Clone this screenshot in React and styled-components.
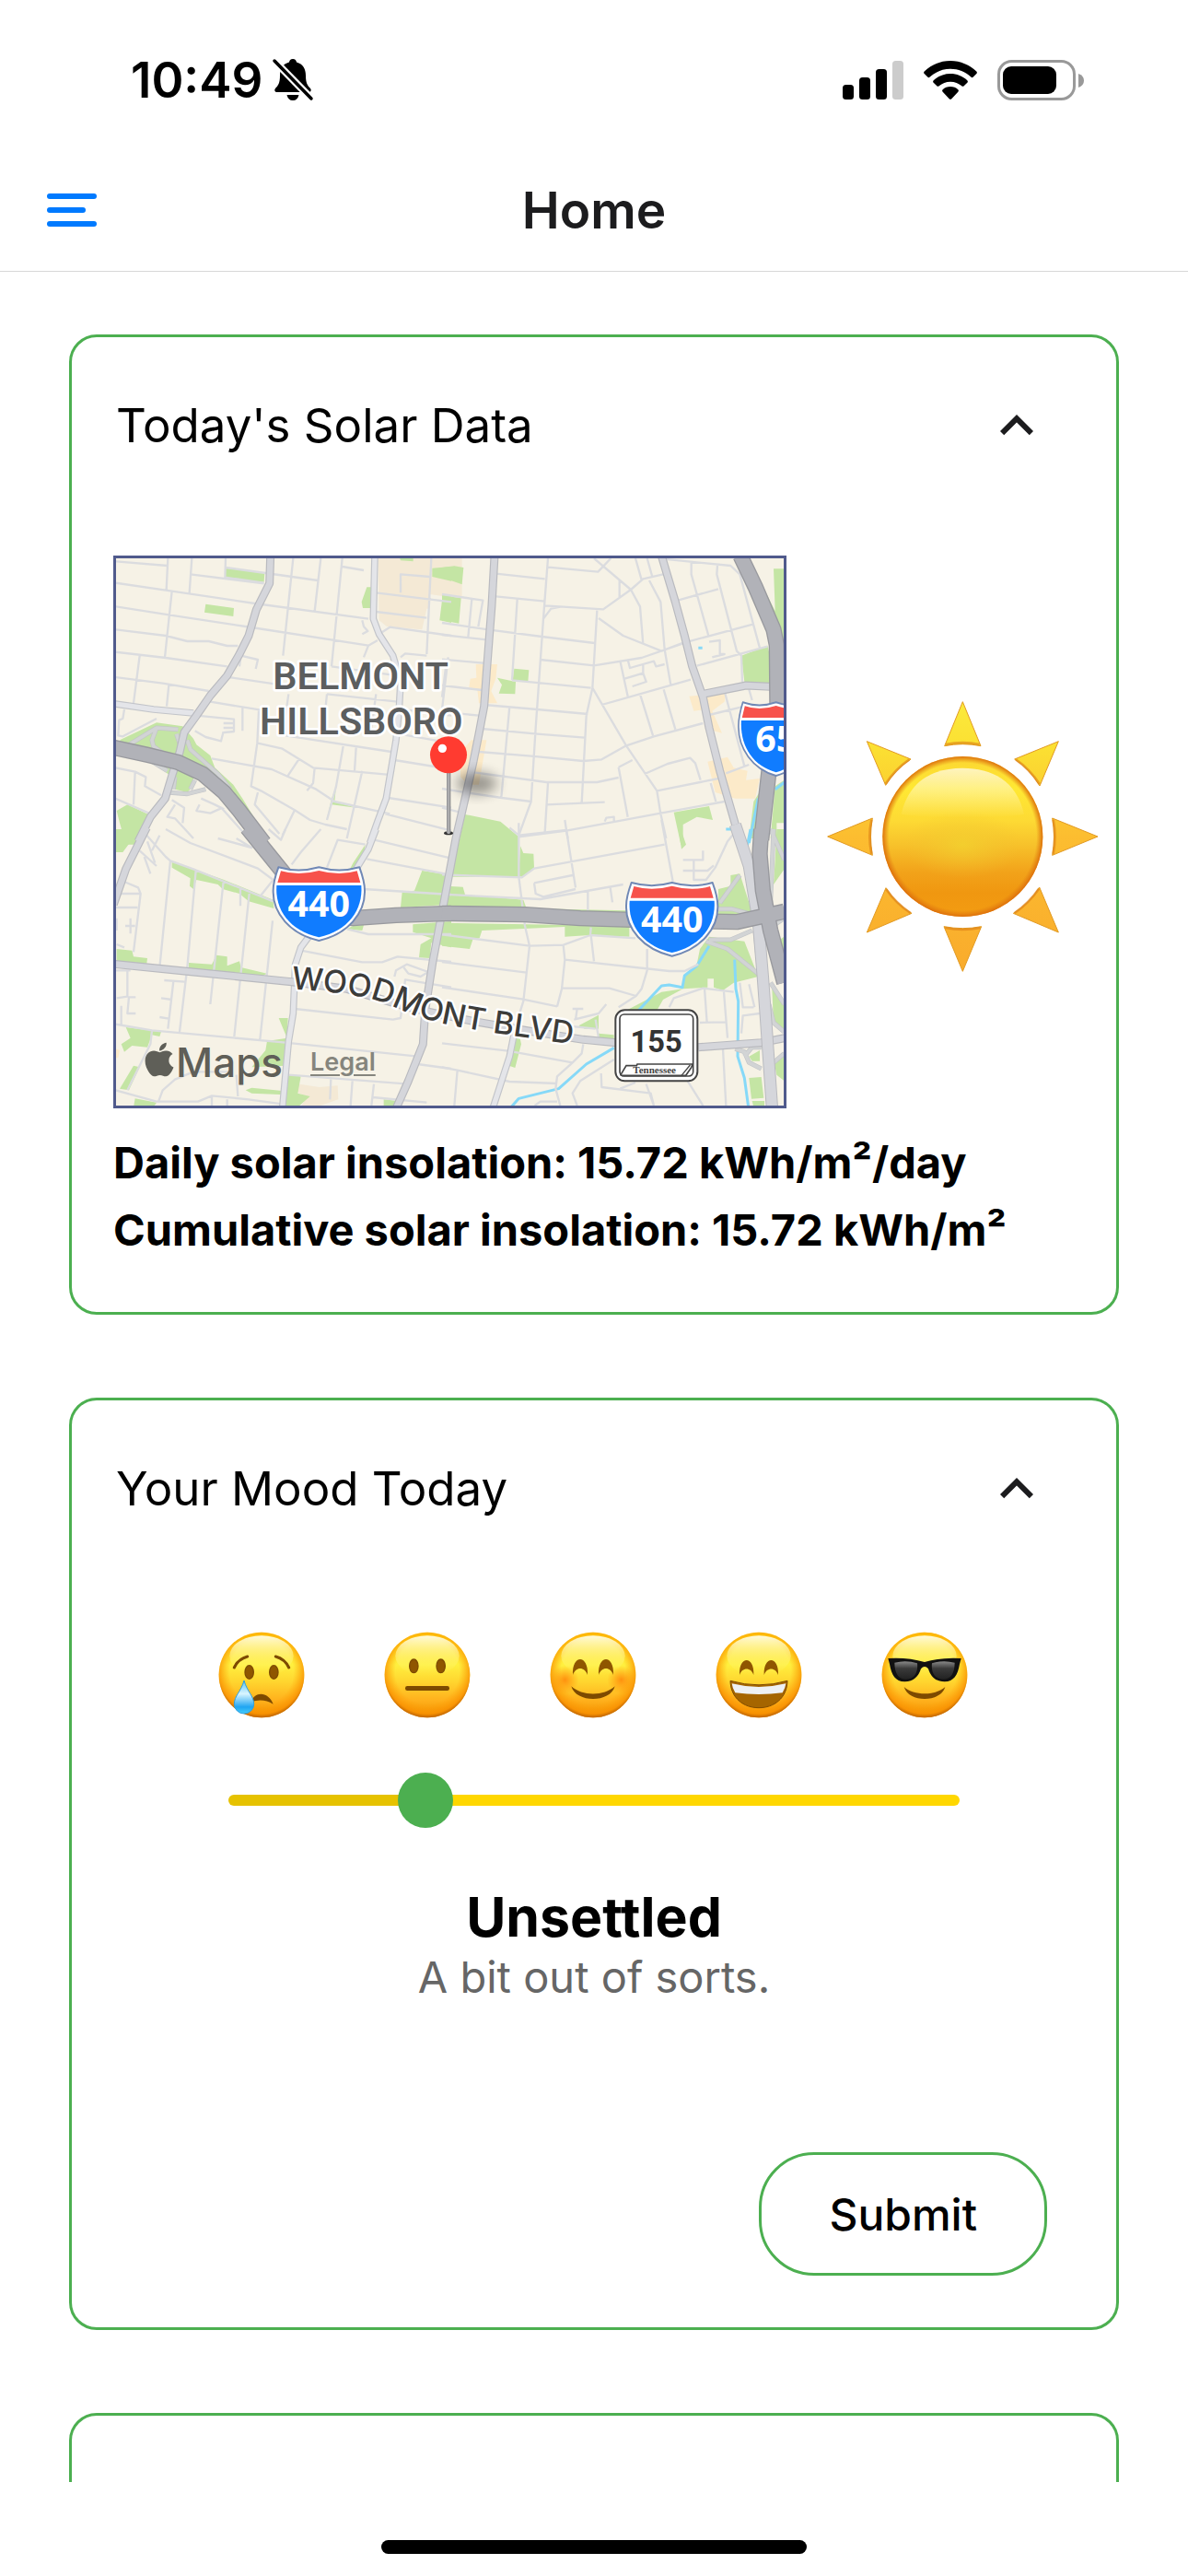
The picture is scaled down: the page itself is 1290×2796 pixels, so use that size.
import React, { useState } from "react";
import styled, { createGlobalStyle } from "styled-components";
import { FaApple } from "react-icons/fa";

const GREEN = "#4caf50";

const GlobalStyle = createGlobalStyle`
  *, *::before, *::after { box-sizing: border-box; }
  body {
    margin: 0;
    background: #ffffff;
    color: #000000;
    font-family: Inter, "Liberation Sans", sans-serif;
  }
  button { font: inherit; color: inherit; background: none; border: 0; padding: 0; cursor: pointer; }
  h1, h2, p { margin: 0; }
  svg { display: block; }
`;

const Screen = styled.div`
  display: flex;
  flex-direction: column;
  height: 100vh;
`;

const StatusBar = styled.div`
  flex: none;
  display: flex;
  align-items: center;
  justify-content: space-between;
  height: 174px;
  padding: 0 112px 0 142px;
`;

const StatusGroup = styled.div`
  display: flex;
  align-items: center;
  gap: ${(p) => p.$gap}px;
`;

const Clock = styled.span`
  font-size: 53px;
  font-weight: 600;
  line-height: 60px;
`;

const NavBar = styled.header`
  flex: none;
  display: grid;
  grid-template-columns: 1fr auto 1fr;
  align-items: center;
  height: 121px;
  padding: 0 51px 12px;
  border-bottom: 1px solid #d8d8d8;
`;

const MenuButton = styled.button`
  justify-self: start;
`;

const NavTitle = styled.h1`
  font-size: 55px;
  font-weight: 600;
  line-height: 66px;
  color: #1c1c1e;
`;

const Content = styled.main`
  flex: 1;
  min-height: 0;
  display: flex;
  flex-direction: column;
  gap: 90px;
  padding: 68px 75px;
  overflow-y: auto;
  scrollbar-width: none;
`;

const Card = styled.section`
  flex: none;
  min-height: 300px;
  border: 3px solid ${GREEN};
  border-radius: 30px;
`;

const CardToggle = styled.button`
  display: flex;
  align-items: center;
  justify-content: space-between;
  width: 100%;
  height: 192px;
  padding: 0 72px 0 48px;
`;

const CardTitle = styled.span`
  font-size: 51px;
  line-height: 66px;
`;

const SolarBody = styled.div`
  padding: 45px 16px 53px 45px;
`;

const SolarRow = styled.div`
  display: flex;
  align-items: center;
  gap: 42px;
`;

const MapFrame = styled.figure`
  position: relative;
  flex: 1;
  min-width: 0;
  height: 600px;
  margin: 0;
  border: 3px solid #505a8c;
  overflow: hidden;
`;

const MapDrawing = styled.svg`
  width: 100%;
  height: 100%;
`;

const Attribution = styled.figcaption`
  position: absolute;
  left: 31px;
  bottom: 20px;
  display: flex;
  align-items: center;
  gap: 30px;
  color: #5f5f58;
`;

const MapsBrand = styled.span`
  display: flex;
  align-items: center;
  gap: 2px;
  font-size: 44px;
  font-weight: 500;
  line-height: 54px;
  svg {
    width: 32px;
    height: 42px;
    margin-bottom: 6px;
  }
`;

const LegalLink = styled.a`
  font-size: 27px;
  font-weight: 600;
  line-height: 36px;
  color: #85857d;
  text-decoration: underline;
  text-underline-offset: 4px;
`;

const Readings = styled.div`
  margin-top: 22px;
  font-size: 47px;
  font-weight: 700;
  line-height: 73px;
`;

const MoodBody = styled.div`
  display: flex;
  flex-direction: column;
  align-items: center;
  padding: 58px 75px 56px;
`;

const FaceRow = styled.div`
  display: flex;
  justify-content: space-between;
  width: 100%;
  max-width: 816px;
`;

const MoodSlider = styled.input`
  appearance: none;
  width: 100%;
  max-width: 794px;
  height: 60px;
  margin: 58px 0 0;
  background: transparent;
  &::-webkit-slider-runnable-track {
    height: 12px;
    border-radius: 6px;
    background: linear-gradient(to right, #e6c200 ${(p) => p.$fill}%, #ffd700 ${(p) => p.$fill}%);
  }
  &::-webkit-slider-thumb {
    appearance: none;
    width: 60px;
    height: 60px;
    margin-top: -24px;
    border-radius: 50%;
    background: ${GREEN};
  }
`;

const MoodName = styled.p`
  margin-top: 61px;
  font-size: 59px;
  font-weight: 700;
  line-height: 72px;
`;

const MoodNote = styled.p`
  font-size: 47px;
  line-height: 57px;
  color: #666666;
`;

const SubmitButton = styled.button`
  align-self: flex-end;
  margin-top: 162px;
  height: 134px;
  padding: 0 73px;
  border: 3px solid ${GREEN};
  border-radius: 60px;
  font-size: 48px;
  font-weight: 500;
`;

const HomeArea = styled.footer`
  flex: none;
  display: flex;
  justify-content: center;
  align-items: flex-end;
  height: 102px;
  padding-bottom: 24px;
`;

const HomeIndicator = styled.div`
  width: 462px;
  height: 15px;
  border-radius: 8px;
  background: #000000;
`;

/* ---------- icons ---------- */

const BellOff = () => (
  <svg width="46" height="48" viewBox="0 0 46 48" aria-label="Silent mode" role="img">
    <path d="M23 1c2.5 0 3.8 1.6 4 3.6C34 6.5 37 12 37 19c0 8 2 11 5 14c1.5 1.6.5 4-1.5 4H5.5c-2 0-3-2.4-1.500-4C7 30 9 27 9 19C9 12 12 6.500 19 4.600C19.200 2.600 20.500 1 23 1z" />
    <path d="M16.500 40h13c-1 4-3 6-6.500 6s-5.500-2-6.500-6z" />
    <path d="M3 3L44 45" stroke="#fff" strokeWidth="8" />
    <path d="M3 3L43 44" stroke="#000" strokeWidth="3.500" strokeLinecap="round" />
  </svg>
);

const Signal = () => (
  <svg width="66" height="42" viewBox="0 0 66 42" aria-label="Signal" role="img">
    <rect x="0" y="26" width="12" height="16" rx="3.500" />
    <rect x="18" y="18" width="12" height="24" rx="3.500" />
    <rect x="36" y="9" width="12" height="33" rx="3.500" />
    <rect x="54" y="0" width="12" height="42" rx="3.500" fill="#ccc" />
  </svg>
);

const Wifi = () => (
  <svg width="58" height="42" viewBox="0 0 58 42" aria-label="Wi-Fi" role="img">
    <path d="M29 0C40 0 50 4.500 57.300 11.500c.8.8.8 1.800 0 2.600l-3.500 3.500c-.8.8-1.700.8-2.500 0C45.300 12 37.500 8.800 29 8.800S12.700 12 6.700 17.600c-.8.8-1.700.8-2.500 0L.7 14.100c-.8-.8-.8-1.800 0-2.600C8 4.500 18 0 29 0z" />
    <path d="M29 14c7 0 13.500 2.700 18.300 7.200c.8.8.8 1.800 0 2.600l-3.600 3.500c-.8.7-1.600.7-2.400 0C38 24.400 33.700 22.700 29 22.700s-9 1.700-12.300 4.600c-.8.7-1.600.7-2.400 0l-3.600-3.500c-.8-.8-.8-1.800 0-2.600C15.500 16.700 22 14 29 14z" />
    <path d="M29 28c3.300 0 6.200 1.200 8.300 3.200c.8.700.8 1.700 0 2.500l-7 7.500c-.8.8-1.800.8-2.600 0l-7-7.500c-.8-.8-.8-1.800 0-2.500C22.800 29.200 25.700 28 29 28z" />
  </svg>
);

const Battery = () => (
  <svg width="95" height="44" viewBox="0 0 95 44" aria-label="Battery" role="img">
    <rect x="1.500" y="1.500" width="82" height="41" rx="14" fill="none" stroke="#999" strokeWidth="3" />
    <path d="M88 15c4 1.500 6 4 6 7.500s-2 6-6 7.500z" fill="#999" />
    <rect x="6" y="7" width="58" height="30" rx="9" />
  </svg>
);

const MenuIcon = () => (
  <svg width="54" height="36" viewBox="0 0 54 36" fill="#007aff" aria-hidden="true">
    <rect width="54" height="6" rx="3" />
    <rect y="15" width="42" height="6" rx="3" />
    <rect y="30" width="54" height="6" rx="3" />
  </svg>
);

const ChevronUp = () => (
  <svg width="72" height="72" viewBox="0 0 24 24" fill="#1c1c1e" aria-hidden="true">
    <path d="M7.410 15.410L12 10.830l4.590 4.580L18 14l-6-6-6 6z" />
  </svg>
);

const Sun = () => (
  <svg width="300" height="310" viewBox="47 23 900 930" role="img" aria-label="Sunny">
    <defs>
      <linearGradient id="disc" x1="0" y1="0" x2="0" y2="1">
        <stop offset="0" stopColor="#fbd532" />
        <stop offset=".2" stopColor="#ffe833" />
        <stop offset=".4" stopColor="#fdda34" />
        <stop offset=".55" stopColor="#f7c22b" />
        <stop offset=".72" stopColor="#f2a31a" />
        <stop offset=".85" stopColor="#f09710" />
        <stop offset="1" stopColor="#f39c12" />
      </linearGradient>
      <radialGradient id="discGlow" cx=".5" cy=".5" r=".5">
        <stop offset="0" stopColor="#f2d22f" stopOpacity=".75" />
        <stop offset="1" stopColor="#f2c12f" stopOpacity="0" />
      </radialGradient>
      <radialGradient id="discRim" cx=".5" cy=".5" r=".5">
        <stop offset=".92" stopColor="#e07a10" stopOpacity="0" />
        <stop offset="1" stopColor="#dc6d0c" stopOpacity=".95" />
      </radialGradient>
      <linearGradient id="gloss" x1="0" y1="0" x2="0" y2="1">
        <stop offset="0" stopColor="#fff" stopOpacity=".68" />
        <stop offset="1" stopColor="#fff" stopOpacity="0" />
      </linearGradient>
      <linearGradient id="rays" gradientUnits="userSpaceOnUse" x1="0" y1="60" x2="0" y2="945">
        <stop offset="0" stopColor="#fbea3d" />
        <stop offset=".17" stopColor="#fbe032" />
        <stop offset=".5" stopColor="#fcbd30" />
        <stop offset="1" stopColor="#f9ab2c" />
      </linearGradient>
    </defs>
    <g fill="url(#rays)" stroke="#e29a22" strokeWidth="3" strokeLinejoin="round">
      <path d="M495 64L554 208Q495 196 436 208z" />
      <path d="M495 942L556 796Q495 808 434 796z" />
      <path d="M55 503L201 443Q190 503 201 564z" />
      <path d="M935 503L787 443Q798 503 787 564z" />
      <path d="M183 193L326 251Q276 284 244 336z" />
      <path d="M807 193L664 251Q714 284 746 338z" />
      <path d="M183 815L329 753Q278 722 245 670z" />
      <path d="M807 815L660 753Q712 720 745 668z" />
    </g>
    <g fill="none" stroke="#dd7f16" strokeWidth="8" opacity=".6">
      <path d="M440 203Q495 192 550 203M438 800Q495 812 552 800M198 448Q186 503 198 559M790 448Q801 503 790 559" />
      <path d="M321 252Q275 284 244 331M668 252Q714 284 745 332M325 752Q277 720 246 675M664 752Q712 718 743 673" />
    </g>
    <circle cx="495" cy="503" r="261" fill="url(#disc)" />
    <ellipse cx="495" cy="530" rx="190" ry="110" fill="url(#discGlow)" />
    <path d="M295 430C320 320 400 280 495 280S670 320 695 430C620 445 370 445 295 430z" fill="url(#gloss)" />
    <circle cx="495" cy="503" r="261" fill="url(#discRim)" />
  </svg>
);

/* ---------- mood faces ---------- */

const BROWN = "#7d4a00";

const HiddenDefs = styled.svg`
  position: absolute;
  width: 0;
  height: 0;
`;

const FaceDefs = () => (
  <HiddenDefs aria-hidden="true">
    <defs>
      <linearGradient id="skin" x1="0" y1="0" x2="0" y2="1">
        <stop offset="0" stopColor="#ffcf0a" />
        <stop offset=".38" stopColor="#fff03f" />
        <stop offset=".58" stopColor="#ffd52f" />
        <stop offset=".8" stopColor="#ffb01c" />
        <stop offset="1" stopColor="#f09000" />
      </linearGradient>
      <radialGradient id="skinRim" cx=".5" cy=".46" r=".55">
        <stop offset=".68" stopColor="#ff9d00" stopOpacity="0" />
        <stop offset=".9" stopColor="#f98f00" stopOpacity=".75" />
        <stop offset="1" stopColor="#a85200" stopOpacity=".95" />
      </radialGradient>
      <linearGradient id="shine" x1="0" y1="0" x2="0" y2="1">
        <stop offset="0" stopColor="#fffde6" stopOpacity=".95" />
        <stop offset="1" stopColor="#fff45a" stopOpacity="0" />
      </linearGradient>
      <radialGradient id="cheek">
        <stop offset="0" stopColor="#ff7200" stopOpacity=".7" />
        <stop offset="1" stopColor="#ff8200" stopOpacity="0" />
      </radialGradient>
      <linearGradient id="tear" x1="0" y1="0" x2="0" y2="1">
        <stop offset="0" stopColor="#5cc4f2" />
        <stop offset=".4" stopColor="#d9f5ff" />
        <stop offset=".8" stopColor="#1fa5f2" />
        <stop offset="1" stopColor="#46cdfa" />
      </linearGradient>
      <linearGradient id="lens" x1="0" y1="0" x2="0" y2="1">
        <stop offset="0" stopColor="#8a8a8a" />
        <stop offset=".4" stopColor="#3a3a3a" />
        <stop offset="1" stopColor="#222" />
      </linearGradient>
    </defs>
  </HiddenDefs>
);

const OvalEyes = ({ x, y }) => (
  <g fill="#8f5600" stroke={BROWN} strokeWidth="4">
    <ellipse cx={-x} cy={y} rx="14" ry="22" />
    <ellipse cx={x} cy={y} rx="14" ry="22" />
  </g>
);

const features = {
  Crying: (
    <>
      <path d="M-89 -24Q-76 -52 -46 -60M46 -60Q76 -52 89 -24" fill="none" stroke={BROWN} strokeWidth="9" strokeLinecap="round" />
      <OvalEyes x={40} y={-9} />
      <path d="M-34 88C-24 54 22 52 38 95Q4 74 -34 88z" fill={BROWN} />
      <path d="M-57 18C-47 55 -25 68 -25 95A32 31 0 0 1 -89 95C-89 68 -67 55 -57 18z" fill="url(#tear)" stroke="#2d9fe0" strokeWidth="3" />
    </>
  ),
  Neutral: (
    <>
      <OvalEyes x={44} y={-29} />
      <rect x="-72" y="36" width="144" height="15" rx="7" fill={BROWN} />
    </>
  ),
  Blushing: (
    <>
      <circle cx="-92" cy="16" r="46" fill="url(#cheek)" />
      <circle cx="92" cy="16" r="46" fill="url(#cheek)" />
      <path d="M-66 0C-70 -68 -14 -68 -18 0C-28 -28 -56 -28 -66 0zM66 0C70 -68 14 -68 18 0C28 -28 56 -28 66 0z" fill="#8f5600" />
      <path d="M-71 37C-35 70 35 70 71 37C56 92 -56 92 -71 37z" fill={BROWN} />
    </>
  ),
  Grinning: (
    <>
      <path d="M-63 0C-66 -64 -14 -64 -17 0C-26 -26 -54 -26 -63 0zM63 0C66 -64 14 -64 17 0C26 -26 54 -26 63 0z" fill="#8f5600" />
      <path d="M-93 19Q0 46 93 19C92 75 50 107 0 107S-92 75 -93 19z" fill="#a56500" stroke={BROWN} strokeWidth="3" />
      <path d="M-88 28Q0 50 88 28Q86 44 77 58Q0 68 -77 58Q-86 44 -88 28z" fill="#eef1f4" />
    </>
  ),
  Cool: (
    <>
      <path d="M-119 -54Q-55 -58 0 -42Q55 -58 119 -54L114 -35C108 0 95 22 65 22C35 22 20 5 12 -20Q0 -34 -12 -20C-20 5 -35 22 -65 22C-95 22 -108 0 -114 -35z" fill="#111" />
      <path d="M-98 -40Q-60 -50 -24 -38C-20 0 -40 14 -62 14S-98 -5 -98 -40zM98 -40Q60 -50 24 -38C20 0 40 14 62 14S98 -5 98 -40z" fill="url(#lens)" />
      <path d="M-67 39C-35 68 35 68 67 39C52 91 -52 91 -67 39z" fill={BROWN} />
    </>
  ),
};

const Face = ({ name }) => (
  <svg width="96" height="96" viewBox="-141 -144 288 288" role="img" aria-label={name}>
    <circle r="139" fill="url(#skin)" />
    <circle r="139" fill="url(#skinRim)" />
    <ellipse cy="-62" rx="104" ry="66" fill="url(#shine)" />
    {features[name]}
  </svg>
);

/* ---------- map ---------- */

/* The map is drawn as four tiles; x and y are each tile's origin. */
const tiles = [
  {
    x: -48,
    y: -48,
    parks:
      "M405 80L532 95 530 125 405 114zM340 197L432 210 430 237 336 224zM865 142H880V210H852L848 190zM1078 80L1140 75V122L1078 108zM1112 168L1140 170V258L1102 250zM972 46H1016V58L975 55zM60 640L180 583 265 595 300 635 310 655 355 690 370 730 430 785 460 830 515 920 480 900 400 800 300 750V790L280 810 240 800 230 760 150 700 90 670zM50 870L85 850 160 885 110 980H80L60 910zM765 790L760 840 830 860 750 850 735 895 750 830z",
    campus: "M902 48H1175V180L1070 165V210L1060 212 1045 280 930 270 905 250z",
    minor:
      "M46 58L215 72M46 128L230 155 500 195 870 245M46 205L220 232 470 270 870 332 900 315M46 280L210 300 280 318H350L410 333H445M46 353L210 372 410 400M46 435L200 455 350 480M415 435L570 458M355 515L520 542M217 48L212 150M295 48L287 160M230 155L207 370M125 365L105 520M220 460L213 530M405 48L403 110 530 128M405 78L600 105 705 120M290 100L530 130M625 48L592 365M715 48L695 220M785 48L750 400M785 75L855 87M895 160L1140 190M895 222L1060 242M1075 48L1060 360M975 160V100L1070 108M850 250L855 270 868 285 850 295M905 295L940 272 1140 300M870 332L855 370M975 370L990 358 1060 365M455 365L450 400M455 365L510 378 503 408M735 490L965 515M750 400L965 430M460 535V610M310 560L432 572V612L400 615M398 585H430M398 600H430M305 610L340 630 390 643 398 612M75 540L70 570 58 575 55 625 70 628 180 570M513 545L508 650 488 790 520 805 630 868 680 900 730 915 800 930M360 700L555 735 700 800 760 840 940 880M510 650L590 668 690 730 930 752M645 700L605 760M695 730L690 780 670 805M788 660L765 790 735 900M830 665L825 740M850 740L800 960M600 625L945 678M955 705L1140 735M935 828L1140 860M925 880L1140 935M510 810L500 850 580 945M630 868L590 950M46 730L110 743 145 760 142 790 195 820M110 743L105 850M46 830L160 880M240 850L215 890 240 895 300 960M325 830L370 850 400 865M320 850L310 870 355 878 395 860M230 835L270 860 265 910M395 865L480 960M980 540L1140 560M970 620L1140 650M610 490L600 560M735 490L725 590M895 490L880 600M1130 370L1110 540",
    ramps:
      "M90 655L180 600 250 605M180 600L165 640 170 660 210 690M245 620L255 650M215 740L150 700M280 640L290 670 380 750 420 800M235 800L240 760M290 800L305 770M215 810L280 815 340 800",
    lightRoads: "M891 40L886 245 905 295 950 365 975 450 970 540 960 640 945 730 928 830 900 905 875 975M46 522L170 540 300 552",
    roads: "M551 40L548 130 505 215 480 300 450 360 410 430 355 495 310 560 270 615 255 680 232 750 208 830 160 890 120 970",
    highways: "M40 664L150 688 250 712 330 750 400 810 450 870 530 975",
  },
  {
    x: 1062,
    y: -48,
    parks:
      "M0 78L40 73 70 78 65 133 0 110zM0 168L62 178 55 260 0 250zM235 407L283 412 280 450 230 445zM180 437L240 450 238 490 185 488 195 460zM1080 82H1115V300L1085 220zM1050 150L1085 220 1115 290V330zM975 365L1060 332 1072 380 1070 455 985 450zM755 875L870 855 882 900 830 890 785 915V980H778zM75 882L190 905 250 955V1085H30zM1015 840L1040 800 1020 960H1000zM1085 790L1115 770V910H1090V960H1070z",
    shops:
      "M110 393H180L175 440 160 480 180 520H120L115 475 88 468 92 440 112 437zM95 640H145L120 785H85L60 760V680zM805 497L925 487 920 515 880 545 912 617 885 610 860 540 820 545zM865 710L930 695 950 730 995 740 990 770 1035 765 1020 830 955 830 890 810z",
    minor:
      "M345 48L330 245 305 600 290 840 250 950M175 98L335 115M345 77L508 92 550 48M175 172L335 188M335 202L525 214 615 150 655 115 720 100M330 245L355 212 385 206M245 182L228 445M0 258L150 280 325 303 497 324M0 297L145 313M97 180L85 305M0 165L133 185 118 270M0 377L145 390M320 378L495 397 650 372 785 325M228 445L485 470M137 525L310 540 475 555M130 603L310 620 465 632M120 678L290 692 460 708 520 703 600 658 690 628 850 585M105 745L340 777H505L575 762M0 798L85 812 195 828 290 840M220 530L193 828M505 218L490 470 470 560 455 845M490 470L600 658 700 805 712 880 730 960M495 48L615 150 645 205 655 328M578 120V178M510 243L590 300 715 350 780 325M675 120L712 190 725 345 745 460M630 48L650 118M668 48L685 108M720 50L940 72 970 100 1035 340M812 60V100L868 300M897 72L895 100 960 350 975 365 978 450M768 185L900 148M780 325L1015 262M830 398L1060 335M520 525L810 443M580 382L605 497M645 490L687 625M722 475L760 605M595 440L655 422 665 450 620 465M605 378L612 405 690 383 697 400 725 393M655 395V425M870 558L985 530M920 480L985 725M1000 475L1010 510M925 748L1000 720M660 750L735 717 808 698 825 715 842 770M700 805L900 765M700 880L920 840M875 780L892 840M575 728L620 705M575 728L605 890M345 780L335 940M340 850L530 842M250 955L405 935 700 880M405 935L410 960M530 905L535 893 560 890V905M870 320L905 315V360H920L880 370M15 380L0 500M0 462L130 477M0 548L120 560M0 860L70 878",
    water: "M835 340H848M1115 778L1085 800M1030 830L1000 975M925 930H942",
    roads: "M171 40L162 200 145 420 137 530 120 620 100 720 75 830 45 960 0 1200M850 490L990 462 1072 466M715 40L760 190 790 300 815 400 850 500 870 600 905 740 970 965",
    highways: "M972 40L1020 140 1080 280 1090 330 1092 540 1065 740 1040 965",
  },
  {
    x: -48,
    y: 882,
    parks:
      "M40 0H125L85 55 70 75H40zM230 103L300 130 400 165 560 230 562 258 480 235 450 210 395 195 380 180 310 165 300 195 288 185 290 160 230 125zM860 50L820 110 810 130 850 110zM1045 135L1140 150V245L975 255 980 205 1020 200zM800 325L850 330 855 312 820 315zM1015 310L1140 300V385L1075 370 1070 420 1035 418 1040 375 1075 355 1015 335zM50 390L100 395 105 415 150 420 148 437 50 430zM285 435L360 440 375 410 410 415V445L450 430 455 450 540 470 520 480 285 460zM80 645L195 660 190 675 165 670 150 710 100 705 75 725 65 700 95 680zM105 770L125 775 90 850 60 845zM578 615H608L600 770 490 775 535 720 540 690 605 680zM470 850L490 842 620 855 600 865 490 860zM610 800L650 805 640 860 680 870 640 905H600zM920 880L965 885 955 905H920zM110 877L180 890 170 905H105z",
    shops: "M46 715L60 720 55 745H46z",
    campus: "M612 825L710 840 770 835 772 880 700 905H650L670 870 620 850z",
    minor:
      "M225 103L190 450M308 135L280 450 255 660M398 170L355 570M482 210L433 675M453 190V250M558 298L517 685M46 635L165 655 600 695 1030 740M165 655L160 700 85 850M46 850L180 887H315L360 868 480 880 590 895M46 255H118M60 210H128M205 492L272 497M235 495L217 650M195 550L230 555M190 612L220 617M85 460V545L50 550M112 547H90L85 600H112M65 575V635M46 460H95M130 0L210 90 225 103 300 130 560 235M210 0L290 45 510 128 560 165 520 215M440 30L490 60 380 30M165 70L190 20M150 40L175 110M140 90L160 145M125 70L180 120M620 115L650 75 715 0M735 125L770 35 860 50M890 35L1140 95M865 97L1120 145M855 195L1140 213M800 325L870 342H1140M650 395L850 433H915L965 415 1140 432M630 585L950 620 975 615 990 490 1140 515M955 480L960 460 995 440 1065 465 1040 480 1000 470 985 450M610 800L1000 830M1030 765L1140 780M748 815L745 880M818 820L812 900M888 830L880 900M885 873L1060 890M185 890L200 850 240 815 300 790H420M440 800L445 870M360 868V900M410 880V900M60 165L120 190 128 210 105 400M50 290V330M95 290V340M78 315H110M50 375L75 385M545 0L585 35 600 0",
    lightRoads: "M895 0L870 65 830 130M680 345L650 385 632 440 625 600 610 690 590 910",
    roads: "M148 -5L80 130 40 245M40 439L300 465 620 497 800 520 1000 580 1100 602M1110 270L1080 430 1055 590 1048 700 1000 820 960 910",
    highways: "M475 -5L600 150 700 270 820 290 960 280 1140 274",
  },
  {
    x: 1062,
    y: 882,
    parks:
      "M255 55L265 78 298 80 300 125 262 155 250 152zM15 185L68 188 75 213 265 230 275 258 600 265V275L0 255zM0 305L280 310 610 315V350L480 345 400 350 400 318 130 330 122 355 100 360 90 390 0 380zM770 0H778L795 50 780 65zM940 150L970 145 1010 270 900 300V195L940 185zM870 350L985 365 1030 480 950 500 915 525 885 515V487H865V515L785 520 790 475 830 440 840 390zM600 590L715 530 785 520 720 555 700 590zM445 640L510 605V650H465zM510 665L560 670V690H510zM245 640L225 700 218 770 238 777 258 700zM1090 0H1115V130L1080 180 1085 100zM1085 370L1115 350V470L1085 430zM1000 740L1035 720V755H1010zM1080 750L1115 730V820L1090 800zM1075 520L1115 560V650L1080 640zM1000 810L1040 807 1048 875 1008 878zM1010 885H1050V905H1015z",
    minor:
      "M250 -20V155L270 315 285 380 265 560 240 640M250 20L405 3 435 190M400 -30L405 3M220 -5L250 20M0 148L260 157 300 128 725 50M715 -30L752 170M300 175L425 150M300 175L305 210 330 220 435 195M0 212L320 228 590 180M475 200V265M548 190L555 238M485 320L483 345 395 377 285 380M0 343L285 380M483 345L630 355M485 345L495 430M395 377L400 425 390 520 375 577M400 425L740 462H790L835 440M668 390V460L650 520 632 543 575 580M390 518H545L632 543M0 432L275 467M0 515L260 553 375 577M430 620L510 600 535 570M425 585H460M440 585L435 620M0 697L215 722 425 760 455 730 460 700M425 760L375 805 370 845 385 900M0 775L50 785 220 822 375 828M50 785L40 900M560 750L450 820 425 860 440 900M518 795L520 840 680 860 690 900M580 845L630 825M665 830L690 900M800 820L850 900M740 580L755 550 850 518 950 530M855 518L863 630M918 530L930 680M840 630L925 628M915 715L925 900M970 500L980 580H1015M1000 505L1018 580M1035 600L980 607 975 665M785 100H850V70M785 135H865L885 118M820 100V165H860L890 125 930 40 950 15M302 900L320 887H375M500 620L510 680M405 640L500 650",
    ramps:
      "M905 240L970 150M900 260L945 260 1000 275M870 360L940 360 1010 330M860 365L930 390 1035 475M1070 0L1115 100M1070 500L1115 570M955 715L985 725 1000 760 1040 780M1040 710L1010 710 985 740M1080 760L1115 730M1065 570L1080 630 1115 660M1080 0L1070 240M1020 330L1035 480M1085 310L1115 290",
    water:
      "M225 905L250 877 380 845 470 765 560 712M640 590L715 510 740 507 783 515 790 477 830 445 870 380M953 425L957 520 965 560 963 740 985 810 998 905M1005 0L993 60",
    lightRoads: "M240 640L220 740 165 910",
    roads: "M-10 602L100 625 300 660 460 685 565 695M835 710L1040 695 1115 680",
    wideRoads: "M955 -15L1000 120 1030 300 1045 480 1055 620 1075 905",
    highways: "M0 274L270 278 450 290 620 295 960 302 1115 268M1040 0L1035 80 1045 200 1070 330 1115 500",
  },
];

const layers = [
  { key: "campus", fill: "#f4e9d5" },
  { key: "shops", fill: "#fceac9" },
  { key: "parks", fill: "#c4e5a4" },
  { key: "water", stroke: "#86d9f8", width: 9 },
  { key: "minor", stroke: "#dbdcdf", width: 7 },
  { key: "ramps", stroke: "#c3c5c8", width: 15 },
  { key: "ramps", stroke: "#d2d4d5", width: 11 },
  { key: "lightRoads", stroke: "#c2c4c9", width: 23 },
  { key: "lightRoads", stroke: "#e4e5e9", width: 16 },
  { key: "roads", stroke: "#b9babf", width: 27 },
  { key: "roads", stroke: "#d5d6db", width: 20 },
  { key: "wideRoads", stroke: "#b9babf", width: 40 },
  { key: "wideRoads", stroke: "#d5d6db", width: 34 },
  { key: "highways", stroke: "#98999e", width: 52 },
  { key: "highways", stroke: "#b1b2b8", width: 44 },
];

const PlaceLabel = styled.text`
  font-family: Roboto, sans-serif;
  font-size: 124px;
  font-weight: 600;
  text-anchor: middle;
  fill: #5c5e5f;
  stroke: #ffffff;
  stroke-width: 16px;
  stroke-linejoin: round;
  paint-order: stroke;
`;

const StreetLabel = styled.text`
  font-family: Inter, sans-serif;
  font-size: 102px;
  font-weight: 500;
  fill: #3c3c3a;
  stroke: #ffffff;
  stroke-width: 14px;
  stroke-linejoin: round;
  paint-order: stroke;
`;

const ShieldNumber = styled.text`
  font-family: "Noto Sans", sans-serif;
  font-size: 118px;
  font-weight: 700;
  text-anchor: middle;
  fill: #ffffff;
`;

const RouteNumber = styled.text`
  font-family: Roboto, sans-serif;
  font-size: 98px;
  font-weight: 700;
  text-anchor: middle;
  fill: #333333;
`;

const StateName = styled.text`
  font-family: "Liberation Serif", serif;
  font-size: 33px;
  font-weight: 700;
  text-anchor: middle;
  fill: #444444;
`;

const Shield = ({ x, y, number, narrow }) => (
  <g transform={`translate(${x} ${y})`}>
    <g transform={narrow ? "scale(.82 1)" : undefined}>
      <path
        d="M-132 -119Q-66 -100 0 -119Q66 -100 132 -119Q150 -70 149 -40C150 30 95 98 0 120C-95 98 -150 30 -149 -40Q-150 -70 -132 -119z"
        fill="#fff"
        stroke="#7088b5"
        strokeWidth="6"
        strokeLinejoin="round"
      />
      <path d="M-124 -107Q-66 -90 0 -108Q66 -90 124 -107L135 -69H-135z" fill="#f7524b" />
      <path d="M-138 -60H138C144 20 95 88 0 109C-95 88 -144 20 -138 -60z" fill="#107cff" />
    </g>
    <ShieldNumber y="42">{number}</ShieldNumber>
  </g>
);

const NeighborhoodMap = () => (
  <MapDrawing viewBox="0 0 2175 1782" preserveAspectRatio="xMidYMid slice" role="img" aria-label="Map of Belmont Hillsboro">
    <defs>
      <path id="boulevard" d="M570 1402C700 1413 820 1420 910 1462C1000 1506 1100 1525 1250 1548L1620 1602" />
      <filter id="soft" x="-50%" y="-50%" width="200%" height="200%">
        <feGaussianBlur stdDeviation="20" />
      </filter>
      <linearGradient id="stem">
        <stop offset="0" stopColor="#8c8c8e" />
        <stop offset=".5" stopColor="#b8b8ba" />
        <stop offset="1" stopColor="#7c7c7e" />
      </linearGradient>
    </defs>
    <rect width="2175" height="1782" fill="#f6f2e6" />
    {layers.map((layer, i) => (
      <g
        key={i}
        fill={layer.fill || "none"}
        stroke={layer.stroke}
        strokeWidth={layer.width}
        strokeLinejoin="round"
      >
        {tiles.map(
          (tile) =>
            tile[layer.key] && (
              <path key={`${tile.x},${tile.y}`} transform={`translate(${tile.x} ${tile.y})`} d={tile[layer.key]} />
            )
        )}
      </g>
    ))}
    <PlaceLabel x="797" y="426">BELMONT</PlaceLabel>
    <PlaceLabel x="799" y="572">HILLSBORO</PlaceLabel>
    <StreetLabel>
      <textPath href="#boulevard">WOODMONT BLVD</textPath>
    </StreetLabel>
    <Shield x={2150} y={588} number="65" narrow />
    <Shield x={661} y={1125} number="440" />
    <Shield x={1811} y={1175} number="440" />
    <g transform="translate(1624 1468)">
      <rect x="3" y="3" width="267" height="231" rx="30" fill="#fff" stroke="#444" strokeWidth="6" />
      <rect x="17" y="17" width="239" height="201" rx="14" fill="#fff" stroke="#444" strokeWidth="5" />
      <path d="M20 214L38 184H72L74 179H254L250 190 232 216H24z" fill="#fff" stroke="#444" strokeWidth="5" />
      <path d="M218 216L246 182" stroke="#444" strokeWidth="4" />
      <RouteNumber x="136" y="140">155</RouteNumber>
      <StateName x="130" y="209">Tennessee</StateName>
    </g>
    <ellipse cx="1175" cy="733" rx="66" ry="34" fill="#000" opacity=".38" filter="url(#soft)" />
    <ellipse cx="1083" cy="895" rx="15" ry="6" fill="#333" />
    <rect x="1077" y="690" width="13" height="207" rx="5" fill="url(#stem)" />
    <circle cx="1083" cy="640" r="60" fill="#ff3b30" />
    <circle cx="1063" cy="619" r="14" fill="#fff" />
  </MapDrawing>
);

/* ---------- screen ---------- */

const moods = [
  { face: "Crying", name: "Sad", note: "Feeling down." },
  { face: "Neutral", name: "Unsettled", note: "A bit out of sorts." },
  { face: "Blushing", name: "Content", note: "Calm and pleasant." },
  { face: "Grinning", name: "Happy", note: "In good spirits." },
  { face: "Cool", name: "Great", note: "On top of the world." },
];

const CollapsibleCard = ({ title, children }) => {
  const [open, setOpen] = useState(true);
  return (
    <Card>
      <CardToggle type="button" aria-expanded={open} onClick={() => setOpen(!open)}>
        <CardTitle>{title}</CardTitle>
        <ChevronUp />
      </CardToggle>
      {open && children}
    </Card>
  );
};

export default function App() {
  const [mood, setMood] = useState(1);
  return (
    <Screen>
      <GlobalStyle />
      <FaceDefs />
      <StatusBar>
        <StatusGroup $gap={10}>
          <Clock>10:49</Clock>
          <BellOff />
        </StatusGroup>
        <StatusGroup $gap={22}>
          <Signal />
          <Wifi />
          <Battery />
        </StatusGroup>
      </StatusBar>
      <NavBar>
        <MenuButton type="button" aria-label="Menu">
          <MenuIcon />
        </MenuButton>
        <NavTitle>Home</NavTitle>
      </NavBar>
      <Content>
        <CollapsibleCard title="Today's Solar Data">
          <SolarBody>
            <SolarRow>
              <MapFrame>
                <NeighborhoodMap />
                <Attribution>
                  <MapsBrand>
                    <FaApple aria-hidden="true" />
                    Maps
                  </MapsBrand>
                  <LegalLink href="#legal">Legal</LegalLink>
                </Attribution>
              </MapFrame>
              <Sun />
            </SolarRow>
            <Readings>
              <p>Daily solar insolation: 15.72 kWh/m²/day</p>
              <p>Cumulative solar insolation: 15.72 kWh/m²</p>
            </Readings>
          </SolarBody>
        </CollapsibleCard>
        <CollapsibleCard title="Your Mood Today">
          <MoodBody>
            <FaceRow>
              {moods.map((m) => (
                <Face key={m.face} name={m.face} />
              ))}
            </FaceRow>
            <MoodSlider
              type="range"
              min="0"
              max="4"
              value={mood}
              aria-label="Mood"
              $fill={mood * 25}
              onChange={(e) => setMood(Number(e.target.value))}
            />
            <MoodName>{moods[mood].name}</MoodName>
            <MoodNote>{moods[mood].note}</MoodNote>
            <SubmitButton type="button">Submit</SubmitButton>
          </MoodBody>
        </CollapsibleCard>
        <Card />
      </Content>
      <HomeArea>
        <HomeIndicator />
      </HomeArea>
    </Screen>
  );
}
